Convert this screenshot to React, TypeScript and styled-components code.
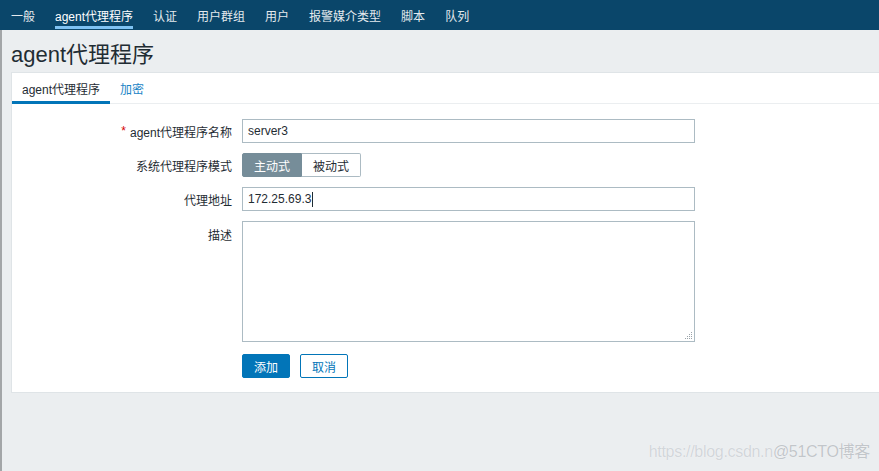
import React from 'react';
import styled, { createGlobalStyle } from 'styled-components';

const GlobalStyle = createGlobalStyle`
  html, body {
    margin: 0;
    padding: 0;
    height: 100%;
    background: #ebeef0;
  }
  body {
    font-family: 'Liberation Sans', Arial, 'Noto Sans CJK SC', sans-serif;
    font-size: 12px;
    color: #1f2c33;
  }
`;

const Page = styled.div`
  position: relative;
  width: 879px;
  height: 471px;
  overflow: hidden;
  background: #ebeef0;
`;

const TopNav = styled.nav`
  display: flex;
  height: 30px;
  background: #0a466a;
  padding-left: 1px;
`;

const NavItem = styled.a<{ $active?: boolean }>`
  position: relative;
  display: flex;
  align-items: center;
  margin: 0 10px;
  height: 30px;
  color: ${p => (p.$active ? '#ffffff' : '#e4eaee')};
  font-size: 12px;
  text-decoration: none;
  white-space: nowrap;
  &::after {
    content: '';
    display: ${p => (p.$active ? 'block' : 'none')};
    position: absolute;
    left: 0;
    right: 0;
    top: 26px;
    height: 3px;
    background: #7fc2f2;
  }
`;

const Main = styled.main`
  border-left: 2px solid #a3a6a8;
  height: 441px;
  box-sizing: border-box;
  padding: 0 0 0 9px;
`;

const Title = styled.h1`
  margin: 0;
  height: 42px;
  display: flex;
  align-items: center;
  padding-top: 2px;
  box-sizing: border-box;
  font-size: 22px;
  font-weight: normal;
  color: #1f2c33;
`;

const Card = styled.section`
  background: #ffffff;
  border: 1px solid #dfe4e7;
  border-right: none;
  padding-bottom: 14px;
`;

const TabBar = styled.div`
  display: flex;
  height: 30px;
  border-bottom: 1px solid #ebeef0;
`;

const Tab = styled.a<{ $active?: boolean }>`
  position: relative;
  display: flex;
  align-items: center;
  padding: 0 10px;
  font-size: 12px;
  text-decoration: none;
  color: ${p => (p.$active ? '#1f2c33' : '#1b84c6')};
  &::after {
    content: '';
    display: ${p => (p.$active ? 'block' : 'none')};
    position: absolute;
    left: 0;
    right: 0;
    bottom: -1px;
    height: 3px;
    background: #0275b8;
  }
`;

const Form = styled.div`
  display: grid;
  grid-template-columns: 220px 453px;
  column-gap: 10px;
  row-gap: 10px;
  padding-top: 15px;
`;

const Label = styled.div<{ $top?: boolean }>`
  display: flex;
  justify-content: flex-end;
  align-items: ${p => (p.$top ? 'flex-start' : 'center')};
  padding-top: ${p => (p.$top ? '5px' : '0')};
  height: ${p => (p.$top ? 'auto' : '24px')};
  color: #1f2c33;
  white-space: nowrap;
`;

const Req = styled.span`
  color: #d40000;
  margin-right: 4px;
`;

const Field = styled.div`
  height: 24px;
  box-sizing: border-box;
  border: 1px solid #acbbc3;
  background: #fff;
  padding: 0 5px;
  display: flex;
  align-items: center;
  color: #1f2c33;
`;

const Caret = styled.span`
  display: inline-block;
  width: 1px;
  height: 15px;
  background: #1f2c33;
  margin-left: 1px;
`;

const Area = styled.div`
  position: relative;
  height: 121px;
  box-sizing: border-box;
  border: 1px solid #acbbc3;
  background: #fff;
`;

const Grip = styled.svg`
  position: absolute;
  right: 1px;
  bottom: 1px;
`;

const Segmented = styled.div`
  display: flex;
  height: 24px;
`;

const Segment = styled.div<{ $on?: boolean }>`
  display: flex;
  align-items: center;
  justify-content: center;
  width: 59px;
  box-sizing: border-box;
  border: 1px solid ${p => (p.$on ? '#768d99' : '#acbbc3')};
  background: ${p => (p.$on ? '#768d99' : '#ffffff')};
  color: ${p => (p.$on ? '#ffffff' : '#1f2c33')};
  border-radius: ${p => (p.$on ? '2px 0 0 2px' : '0 2px 2px 0')};
  ${p => (p.$on ? 'width: 60px;' : 'border-left: none;')}
`;

const Actions = styled.div`
  grid-column: 2;
  display: flex;
  gap: 10px;
  margin-top: 2px;
`;

const Button = styled.button<{ $primary?: boolean }>`
  height: 24px;
  width: 48px;
  padding: 0;
  border-radius: 2px;
  font-family: inherit;
  font-size: 12px;
  border: 1px solid #0275b8;
  background: ${p => (p.$primary ? '#0275b8' : '#ffffff')};
  color: ${p => (p.$primary ? '#ffffff' : '#0275b8')};
  cursor: pointer;
`;

const Watermark = styled.div`
  position: absolute;
  right: 9px;
  bottom: 9px;
  font-size: 16px;
  white-space: nowrap;
  letter-spacing: -0.3px;
  color: #d2d6da;
  text-shadow: 0 0 1px #ffffff;
`;

const WatermarkStrong = styled.span`
  color: #c2c6ca;
`;

const navItems = ['一般', 'agent代理程序', '认证', '用户群组', '用户', '报警媒介类型', '脚本', '队列'];

export default function App() {
  return (
    <>
      <GlobalStyle />
      <Page>
        <TopNav>
          {navItems.map(n => (
            <NavItem key={n} $active={n === 'agent代理程序'}>{n}</NavItem>
          ))}
        </TopNav>
        <Main>
          <Title>agent代理程序</Title>
          <Card>
            <TabBar>
              <Tab $active>agent代理程序</Tab>
              <Tab>加密</Tab>
            </TabBar>
            <Form>
              <Label><Req>*</Req>agent代理程序名称</Label>
              <Field>server3</Field>

              <Label>系统代理程序模式</Label>
              <Segmented>
                <Segment $on>主动式</Segment>
                <Segment>被动式</Segment>
              </Segmented>

              <Label>代理地址</Label>
              <Field>172.25.69.3<Caret /></Field>

              <Label $top>描述</Label>
              <Area>
                <Grip width="10" height="10" viewBox="0 0 10 10">
                  <g fill="#9aa3a9">
                    <rect x="8" y="2" width="1" height="1" />
                    <rect x="6" y="4" width="1" height="1" />
                    <rect x="8" y="4" width="1" height="1" />
                    <rect x="4" y="6" width="1" height="1" />
                    <rect x="6" y="6" width="1" height="1" />
                    <rect x="8" y="6" width="1" height="1" />
                    <rect x="2" y="8" width="1" height="1" />
                    <rect x="4" y="8" width="1" height="1" />
                    <rect x="6" y="8" width="1" height="1" />
                    <rect x="8" y="8" width="1" height="1" />
                  </g>
                </Grip>
              </Area>

              <Actions>
                <Button $primary>添加</Button>
                <Button>取消</Button>
              </Actions>
            </Form>
          </Card>
        </Main>
        <Watermark>
          https://blog.csdn.n<WatermarkStrong>@51CTO博客</WatermarkStrong>
        </Watermark>
      </Page>
    </>
  );
}
